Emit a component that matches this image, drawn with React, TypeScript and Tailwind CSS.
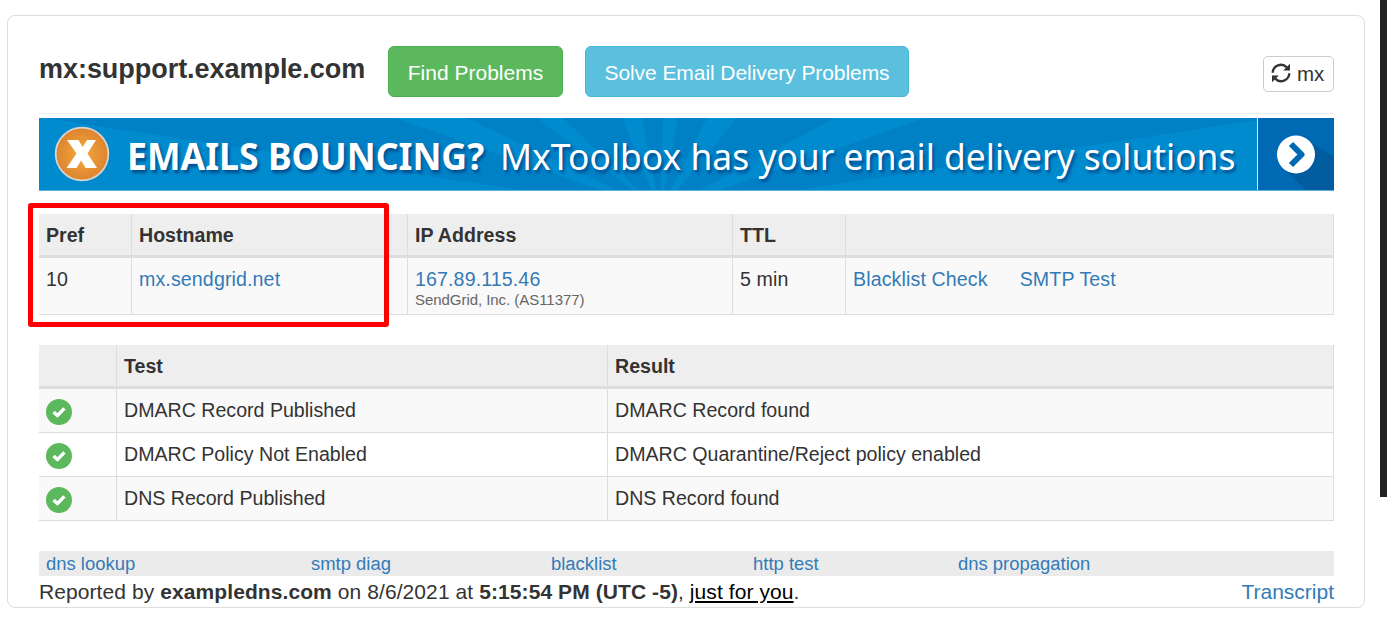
import type { ReactNode } from "react";

function Link({ children }: { children: ReactNode }) {
  return <a href="#" className="whitespace-nowrap text-[#337ab7]">{children}</a>;
}

function RefreshIcon() {
  return (
    <svg className="-mt-[2px] h-5 w-5" viewBox="0 0 20 20" fill="none">
      <path d="M1.7 9.8A8.2 8.2 0 0 1 15.8 4.4" stroke="#333" strokeWidth="2.3" />
      <path d="M19 0.8V7.4H12.2Z" fill="#333" />
      <path d="M18.3 10.2A8.2 8.2 0 0 1 4.2 15.6" stroke="#333" strokeWidth="2.3" />
      <path d="M1 19.2V12.6H7.8Z" fill="#333" />
    </svg>
  );
}

function CheckBadge() {
  return (
    <svg className="block h-[26px] w-[26px]" viewBox="0 0 26 26">
      <circle cx="13" cy="13" r="13" fill="#5cb85c" />
      <path d="M7.6 13L11.4 16.6L18.4 9.4" fill="none" stroke="#fff" strokeWidth="3.4" strokeLinejoin="round" />
    </svg>
  );
}

function Rays() {
  return (
    <svg className="absolute inset-0 h-full w-full" viewBox="0 0 1218 72" preserveAspectRatio="none">
      <rect width="1218" height="72" fill="#008bce" />
      <g fill="#0081c6">
        <path d="M621 93L6 0H356Z" />
        <path d="M621 93L428 0H498Z" />
        <path d="M621 93L524 0H583Z" />
        <path d="M621 93L603 0H624Z" />
        <path d="M621 93L639 0H668Z" />
        <path d="M621 93L698 0H796Z" />
        <path d="M621 93L886 0H1218V2Z" />
        <path d="M621 93L440 72H540Z" />
        <path d="M621 93L700 72H860Z" />
      </g>
    </svg>
  );
}

function Banner() {
  return (
    <div className="flex h-[73px] border-b border-[#58b0dd] text-white">
      <div className="relative flex w-[1218px] items-center overflow-hidden">
        <Rays />
        <svg className="relative ml-[15px] h-[56px] w-[56px] shrink-0" viewBox="0 0 56 56">
          <defs>
            <radialGradient id="orange">
              <stop offset="0" stopColor="#f6a93b" />
              <stop offset="1" stopColor="#dc8430" />
            </radialGradient>
          </defs>
          <circle cx="28" cy="28" r="26.3" fill="url(#orange)" stroke="#dcd3cd" strokeWidth="1.8" />
          <path d="M13 14H24.5L28.5 21L33 14H42L33.5 27.5L43 42H31.5L27.2 34.5L22.5 42H12.5L22.5 27.5Z" fill="#fff" />
        </svg>
        <div className="relative ml-[17px] w-[373px] shrink-0 whitespace-nowrap font-['Noto_Sans'] text-[37px] leading-[72px] font-bold [text-shadow:2px_3px_3px_#004f91]">
          <div className="origin-left scale-x-[0.963] pt-[4px]">EMAILS BOUNCING?</div>
        </div>
        <div className="relative shrink-0 whitespace-nowrap font-['Noto_Sans'] text-[37px] leading-[72px] [text-shadow:2px_3px_3px_#004f91]">
          <div className="origin-left scale-x-[0.957] pt-[4px]">MxToolbox has your email delivery solutions</div>
        </div>
      </div>
      <div className="w-px bg-[#d5eaf6]" />
      <svg className="h-[72px] w-[76px]" viewBox="0 0 76 72">
        <rect width="76" height="72" fill="#0069b4" />
        <path d="M51 23L76 39V72H48L24 49Z" fill="#005c9f" />
        <circle cx="38" cy="36.5" r="19" fill="#fff" />
        <path d="M33 26L43.5 36.5L33 47" fill="none" stroke="#0069b4" strokeWidth="6" strokeLinejoin="round" />
      </svg>
    </div>
  );
}

const tests = [
  ["DMARC Record Published", "DMARC Record found"],
  ["DMARC Policy Not Enabled", "DMARC Quarantine/Reject policy enabled"],
  ["DNS Record Published", "DNS Record found"],
];

export default function App() {
  return (
    <div className="flex h-[619px] w-[1387px] justify-between overflow-hidden bg-white pl-[7px] font-['Liberation_Sans',sans-serif] text-[19.6px] text-[#333]">
      <main className="mt-[15px] h-[593px] w-[1358px] rounded-lg border border-[#ddd] pr-[30px] pl-[31px]">
        <header className="flex h-[98px] items-start border-b border-[#eee] pt-[30px]">
          <h1 className="w-[349px] pt-[4px] text-[27px] leading-[38px] font-bold tracking-[-0.04px] whitespace-nowrap">mx:support.example.com</h1>
          <button className="h-[51px] w-[175px] rounded-md border border-[#4cae4c] bg-[#5cb85c] pt-[2px] text-[21px] whitespace-nowrap text-white">Find Problems</button>
          <button className="ml-[22px] h-[51px] w-[324px] rounded-md border border-[#46b8da] bg-[#5bc0de] pt-[2px] text-[21px] tracking-[-0.07px] whitespace-nowrap text-white">Solve Email Delivery Problems</button>
          <button className="mt-[10px] ml-auto flex h-[36px] w-[71px] items-center rounded-[5px] border border-[#ccc] bg-white pl-[7px] text-[20.5px]">
            <RefreshIcon />
            <span className="ml-[6px]">mx</span>
          </button>
        </header>
        <div className="pt-[4px]">
          <Banner />
        </div>

        <section className="relative mt-[23px] border-r border-b border-[#ddd]">
          <div className="grid h-[44px] grid-cols-[92px_276px_325px_113px_1fr] border-b-[3px] border-[#ddd] bg-[#eee] leading-[42px] font-bold">
            <div className="pl-[7px]">Pref</div>
            <div className="border-l border-[#ddd] pl-[7px]">Hostname</div>
            <div className="border-l border-[#ddd] pl-[7px]">IP Address</div>
            <div className="border-l border-[#ddd] pl-[7px]">TTL</div>
            <div className="border-l border-[#ddd]" />
          </div>
          <div className="grid h-[56px] grid-cols-[92px_276px_325px_113px_1fr] bg-[#f9f9f9] leading-[42px] tracking-[0.12px]">
            <div className="pl-[7px]">10</div>
            <div className="border-l border-[#ddd] pl-[7px]"><Link>mx.sendgrid.net</Link></div>
            <div className="border-l border-[#ddd] pt-[7px] pl-[7px] leading-[28px]">
              <div><Link>167.89.115.46</Link></div>
              <div className="text-[15px] leading-[14px] tracking-[-0.05px] text-[#666]">SendGrid, Inc. (AS11377)</div>
            </div>
            <div className="border-l border-[#ddd] pl-[7px]">5 min</div>
            <div className="flex gap-[32px] border-l border-[#ddd] pl-[7px]">
              <Link>Blacklist Check</Link>
              <Link>SMTP Test</Link>
            </div>
          </div>
          <div className="absolute top-[-11px] left-[-11px] h-[124px] w-[361px] rounded-[3px] border-[5px] border-[#ff0000]" />
        </section>

        <section className="mt-[30px] border-r border-[#ddd]">
          <div className="grid h-[44px] grid-cols-[77px_491px_1fr] border-b-[3px] border-[#ddd] bg-[#eee] leading-[42px] font-bold">
            <div />
            <div className="border-l border-[#ddd] pl-[7px]">Test</div>
            <div className="border-l border-[#ddd] pl-[7px]">Result</div>
          </div>
          {tests.map(([name, result]) => (
            <div key={name} className="grid h-[44px] grid-cols-[77px_491px_1fr] border-b border-[#ddd] leading-[42px] odd:bg-white even:bg-[#f9f9f9]">
              <div className="pt-[10px] pl-[7px]"><CheckBadge /></div>
              <div className="border-l border-[#ddd] pl-[7px]">{name}</div>
              <div className="border-l border-[#ddd] pl-[7px]">{result}</div>
            </div>
          ))}
        </section>

        <nav className="mt-[30px] grid h-[25px] grid-cols-[265px_240px_202px_205px_1fr] bg-[#ebebeb] pl-[7px] text-[18.45px] leading-[26px]">
          <Link>dns lookup</Link>
          <Link>smtp diag</Link>
          <Link>blacklist</Link>
          <Link>http test</Link>
          <Link>dns propagation</Link>
        </nav>
        <footer className="flex justify-between text-[21px] leading-[32px]">
          <p className="tracking-[0.085px]">
            Reported by <b>exampledns.com</b> on 8/6/2021 at <b>5:15:54 PM (UTC -5)</b>,{" "}
            <a href="#" className="text-black underline">just for you</a>.
          </p>
          <Link>Transcript</Link>
        </footer>
      </main>
      <div className="h-[497px] w-[7px] bg-[#222]" />
    </div>
  );
}
